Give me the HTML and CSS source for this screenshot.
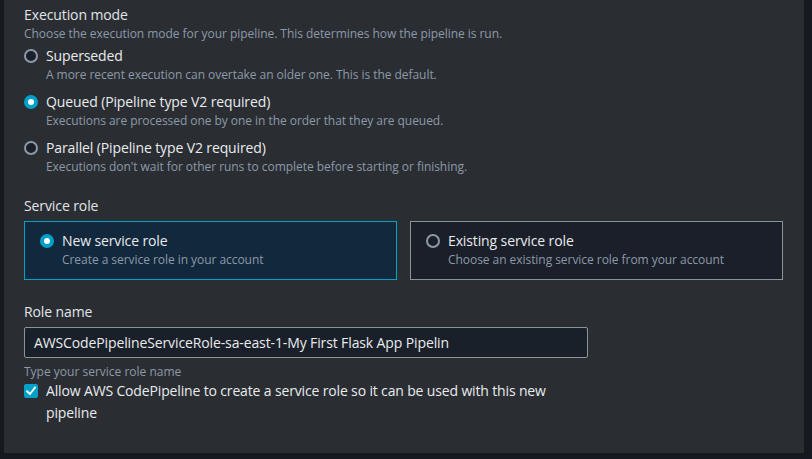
FILE: index.html
```html
<!DOCTYPE html>
<html>
<head>
<meta charset="utf-8">
<link rel="stylesheet" href="styles.css">
</head>
<body>
<div class="panel">
  <section class="field">
    <div class="label">Execution mode</div>
    <div class="desc">Choose the execution mode for your pipeline. This determines how the pipeline is run.</div>
    <div class="radios">
      <div class="radio-item">
        <span class="radio"></span>
        <div class="radio-text">
          <div class="radio-label">Superseded</div>
          <div class="radio-desc">A more recent execution can overtake an older one. This is the default.</div>
        </div>
      </div>
      <div class="radio-item">
        <span class="radio checked"></span>
        <div class="radio-text">
          <div class="radio-label">Queued (Pipeline type V2 required)</div>
          <div class="radio-desc">Executions are processed one by one in the order that they are queued.</div>
        </div>
      </div>
      <div class="radio-item">
        <span class="radio"></span>
        <div class="radio-text">
          <div class="radio-label">Parallel (Pipeline type V2 required)</div>
          <div class="radio-desc">Executions don't wait for other runs to complete before starting or finishing.</div>
        </div>
      </div>
    </div>
  </section>

  <section class="field service">
    <div class="label">Service role</div>
    <div class="tiles">
      <div class="tile selected">
        <span class="radio checked"></span>
        <div class="radio-text">
          <div class="radio-label">New service role</div>
          <div class="radio-desc">Create a service role in your account</div>
        </div>
      </div>
      <div class="tile">
        <span class="radio"></span>
        <div class="radio-text">
          <div class="radio-label">Existing service role</div>
          <div class="radio-desc">Choose an existing service role from your account</div>
        </div>
      </div>
    </div>
  </section>

  <section class="field role">
    <div class="label">Role name</div>
    <div class="input">AWSCodePipelineServiceRole-sa-east-1-My First Flask App Pipelin</div>
    <div class="hint">Type your service role name</div>
    <div class="check-row">
      <span class="checkbox"><svg width="14" height="14" viewBox="0 0 14 14"><path d="M3 7.2 L6 10 L11 3.5" fill="none" stroke="#fff" stroke-width="2" stroke-linecap="round" stroke-linejoin="round"/></svg></span>
      <div class="check-label">Allow AWS CodePipeline to create a service role so it can be used with this new<br>pipeline</div>
    </div>
  </section>
</div>
</body>
</html>
```

FILE: styles.css
```css
* { box-sizing: border-box; }
html, body {
  margin: 0;
  padding: 0;
  background: #16191f;
  height: 459px;
  overflow: hidden;
}
body {
  font-family: "Open Sans", "Noto Sans", sans-serif;
  color: #e9ebed;
}
.panel {
  margin-left: 4px;
  width: 800px;
  height: 453px;
  background: #2a2e33;
  padding: 5px 20px 0 20px;
}
.label {
  font-size: 14px;
  line-height: 20px;
  color: #e1e4e8;
  letter-spacing: -0.1px;
}
.desc {
  font-size: 12px;
  line-height: 17px;
  color: #8d99a8;
  letter-spacing: -0.05px;
}
.radios {
  display: flex;
  flex-direction: column;
  gap: 9px;
  margin-top: 4px;
}
.radio-item {
  display: flex;
  gap: 8px;
  align-items: flex-start;
}
.radio {
  flex: none;
  width: 14px;
  height: 14px;
  border-radius: 50%;
  border: 2px solid #8d99a8;
  background: #1a1f29;
  margin-top: 3px;
  position: relative;
}
.radio.checked {
  border: none;
  background: #00a1c9;
}
.radio.checked::after {
  content: "";
  position: absolute;
  left: 4px;
  top: 4px;
  width: 6px;
  height: 6px;
  border-radius: 50%;
  background: #fff;
}
.radio-label {
  font-size: 14px;
  line-height: 20px;
  color: #e9ebed;
  letter-spacing: -0.12px;
}
.radio-desc {
  font-size: 12px;
  line-height: 17px;
  color: #8d99a8;
  letter-spacing: -0.05px;
}
.service {
  margin-top: 21px;
}
.tiles {
  display: flex;
  gap: 13px;
  margin-top: 5px;
}
.tile {
  width: 373px;
  height: 59px;
  border: 1px solid #879596;
  background: #1a1f29;
  display: flex;
  gap: 8px;
  padding: 9px 15px;
}
.tile.selected {
  border-color: #00a1c9;
  background: #12283d;
}
.role {
  margin-top: 22px;
}
.input {
  width: 564px;
  height: 31px;
  margin-top: 5px;
  border: 1px solid #879596;
  border-radius: 2px;
  background: #1a2029;
  font-size: 14px;
  line-height: 29px;
  padding: 0 9px;
  color: #e9ebed;
  white-space: nowrap;
  overflow: hidden;
  letter-spacing: -0.12px;
}
.hint {
  font-size: 12px;
  line-height: 16px;
  color: #8d99a8;
  margin-top: 6px;
}
.check-row {
  display: flex;
  gap: 8px;
  margin-top: 0;
}
.checkbox {
  flex: none;
  width: 14px;
  height: 14px;
  background: #00a1c9;
  border-radius: 2px;
  margin-top: 4px;
  display: flex;
}
.check-label {
  font-size: 14px;
  line-height: 22px;
  color: #e9ebed;
  letter-spacing: -0.15px;
}
```
